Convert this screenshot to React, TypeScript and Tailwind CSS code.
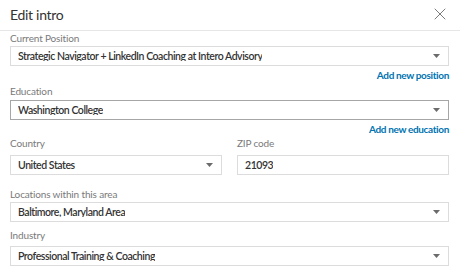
import { X } from 'lucide-react';

const font = { fontFamily: '"Lato", "Liberation Sans", sans-serif' };

function Caret() {
  return (
    <svg width="7" height="4" viewBox="0 0 7 4" className="shrink-0">
      <path d="M0 0 L7 0 L3.5 4 Z" fill="#6b6b6b" />
    </svg>
  );
}

function Box({ value, select = true, focused = false }: { value: string; select?: boolean; focused?: boolean }) {
  return (
    <div
      className={`h-[20px] flex items-center justify-between pl-[7px] pr-[8px] border bg-white ${
        focused ? 'border-[#a6a6a6]' : 'border-[#dcdcdc]'
      }`}
    >
      <span className="text-[10.5px] font-semibold tracking-[-0.45px] text-[#333] leading-none truncate">{value}</span>
      {select && <Caret />}
    </div>
  );
}

function Label({ children }: { children: string }) {
  return <div className="h-[14px] text-[10px] tracking-[-0.15px] leading-[14px] text-[#7a7a7a]">{children}</div>;
}

function AddLink({ children }: { children: string }) {
  return (
    <div className="h-[14px] flex justify-end">
      <a className="text-[10px] leading-[14px] font-bold tracking-[-0.35px] text-[#0073b1]">{children}</a>
    </div>
  );
}

export default function App() {
  return (
    <div style={font} className="w-[460px] h-[277px] bg-white overflow-hidden">
      {/* Header */}
      <div className="h-[31px] flex items-center justify-between pl-[10px] pr-[10px] pb-[2px] border-b border-[#e6e6e6]">
        <h1 className="text-[14px] tracking-[-0.3px] text-[#333]">Edit intro</h1>
        <X className="h-[20px] w-[20px] text-[#6e6e6e]" strokeWidth={1.1} />
      </div>

      <div className="pl-[10px] pr-[11px]">
        <div>
          <Label>Current Position</Label>
          <div className="mt-[1px]">
            <Box value="Strategic Navigator + LinkedIn Coaching at Intero Advisory" />
          </div>
          <div className="mt-[2px]">
            <AddLink>Add new position</AddLink>
          </div>
        </div>

        <div className="mt-[2px]">
          <Label>Education</Label>
          <div className="mt-[2px]">
            <Box value="Washington College" focused />
          </div>
          <div className="mt-[2px]">
            <AddLink>Add new education</AddLink>
          </div>
        </div>

        <div className="flex gap-[15px]">
          <div className="w-[212px]">
            <Label>Country</Label>
            <div className="mt-[5px]">
              <Box value="United States" />
            </div>
          </div>
          <div className="flex-1">
            <Label>ZIP code</Label>
            <div className="mt-[5px]">
              <Box value="21093" select={false} />
            </div>
          </div>
        </div>

        <div className="mt-[12px]">
          <Label>Locations within this area</Label>
          <div className="mt-[1px]">
            <Box value="Baltimore, Maryland Area" />
          </div>
        </div>

        <div className="mt-[6px]">
          <Label>Industry</Label>
          <div className="mt-[4px]">
            <Box value="Professional Training & Coaching" />
          </div>
        </div>
      </div>
    </div>
  );
}
